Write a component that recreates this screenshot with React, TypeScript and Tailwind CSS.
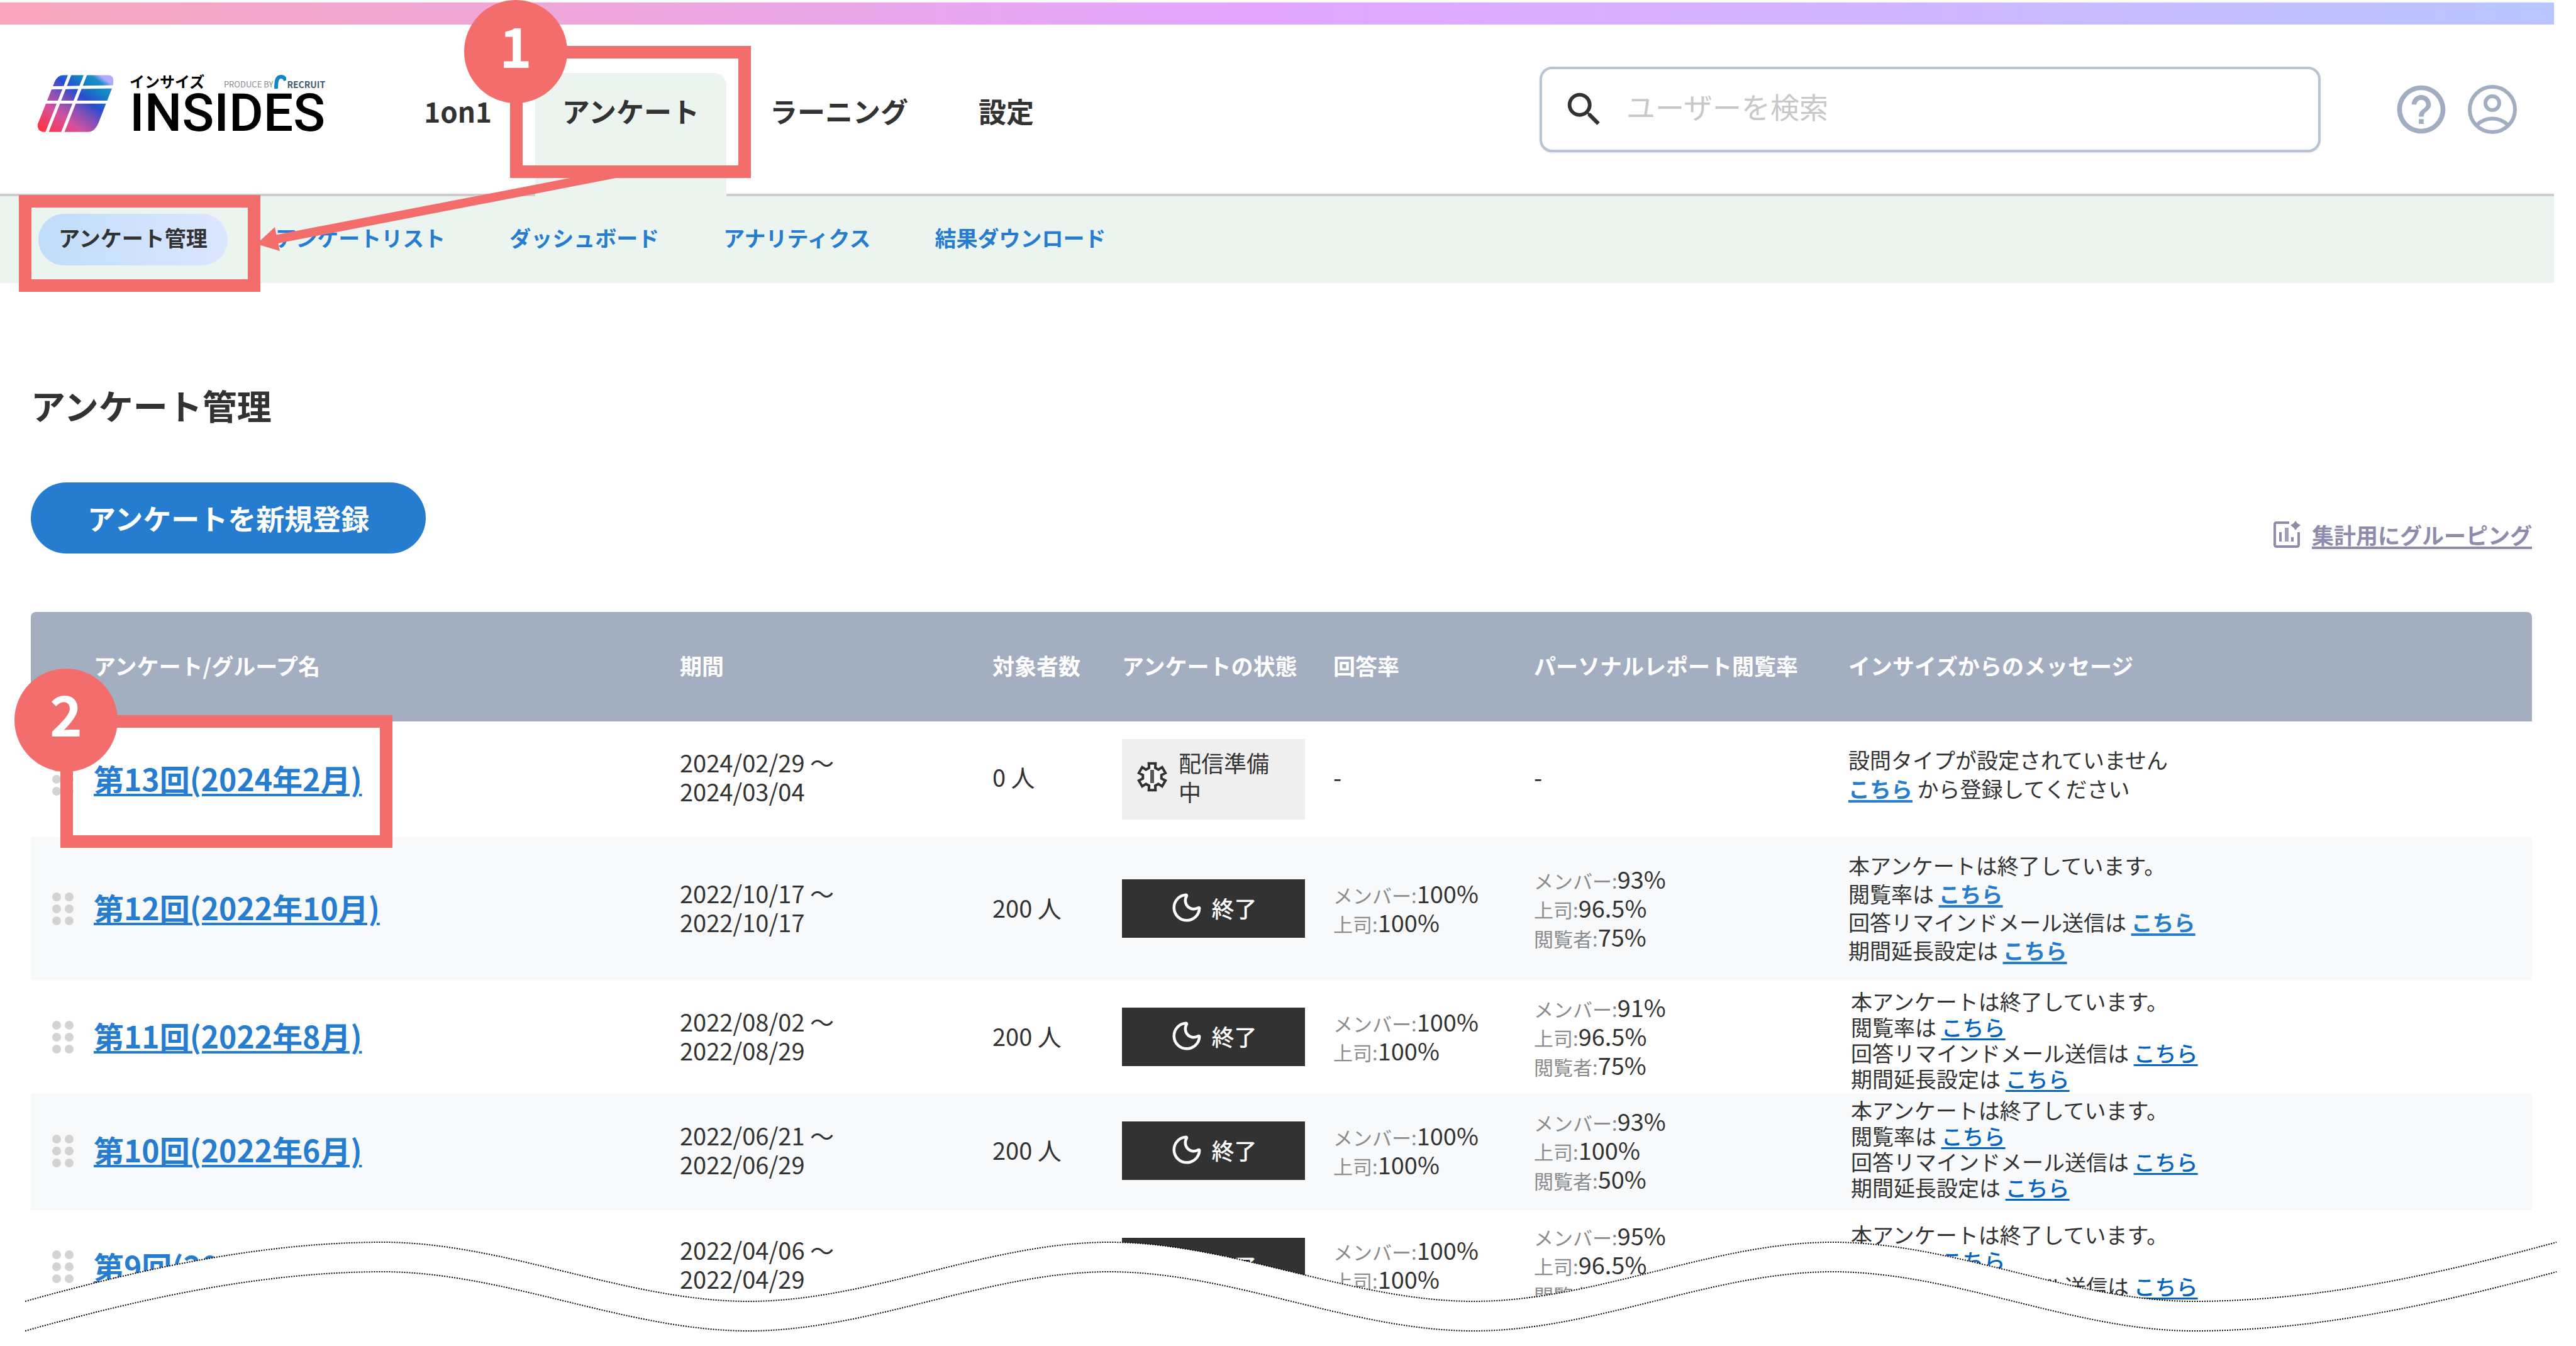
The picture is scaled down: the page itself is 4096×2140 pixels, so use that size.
import React from "react";
import { MdHelpOutline, MdSearch } from "react-icons/md";
import { Moon } from "lucide-react";

type Rate = { label: string; value: string };

type Survey = {
  name: string;
  from: string;
  to: string;
  count: string;
  done: boolean;
  answer: Rate[];
  report: Rate[];
  rowClass: string;
  nameClass: string;
  cellClass: string;
  messageClass: string;
  linkClass: string;
};

const members = (value: string): Rate => ({ label: "メンバー:", value });
const boss = (value: string): Rate => ({ label: "上司:", value });
const viewer = (value: string): Rate => ({ label: "閲覧者:", value });

const blueLink = "font-bold text-[#267dcf] underline decoration-4 underline-offset-4";
const deepLink = "font-medium text-[#0563c1] underline decoration-3 underline-offset-4";

const surveys: Survey[] = [
  {
    name: "第13回(2024年2月)",
    from: "2024/02/29",
    to: "2024/03/04",
    count: "0",
    done: false,
    answer: [],
    report: [],
    rowClass: "h-[184px] bg-white",
    nameClass: "",
    cellClass: "pb-2",
    messageClass: "pb-4 leading-[46px]",
    linkClass: blueLink,
  },
  {
    name: "第12回(2022年10月)",
    from: "2022/10/17",
    to: "2022/10/17",
    count: "200",
    done: true,
    answer: [members("100%"), boss("100%")],
    report: [members("93%"), boss("96.5%"), viewer("75%")],
    rowClass: "h-[227px] bg-[#f7f9fb]",
    nameClass: "",
    cellClass: "pb-1",
    messageClass: "pb-1 leading-[45px]",
    linkClass: blueLink,
  },
  {
    name: "第11回(2022年8月)",
    from: "2022/08/02",
    to: "2022/08/29",
    count: "200",
    done: true,
    answer: [members("100%"), boss("100%")],
    report: [members("91%"), boss("96.5%"), viewer("75%")],
    rowClass: "h-[181px] bg-white",
    nameClass: "",
    cellClass: "pb-1",
    messageClass: "pt-2 pl-1 leading-[41px]",
    linkClass: deepLink,
  },
  {
    name: "第10回(2022年6月)",
    from: "2022/06/21",
    to: "2022/06/29",
    count: "200",
    done: true,
    answer: [members("100%"), boss("100%")],
    report: [members("93%"), boss("100%"), viewer("50%")],
    rowClass: "h-[185px] bg-[#f7f9fb]",
    nameClass: "pb-1",
    cellClass: "pb-2",
    messageClass: "pb-3 pl-1 leading-[41px]",
    linkClass: deepLink,
  },
  {
    name: "第9回(2022年4月)",
    from: "2022/04/06",
    to: "2022/04/29",
    count: "200",
    done: true,
    answer: [members("100%"), boss("100%")],
    report: [members("95%"), boss("96.5%"), viewer("75%")],
    rowClass: "h-[184px] bg-white",
    nameClass: "pb-1",
    cellClass: "pb-3",
    messageClass: "pt-4 pl-1 leading-[41px]",
    linkClass: deepLink,
  },
];

const gearPoints = Array.from({ length: 6 }, (_, tooth) =>
  [
    [15, -19],
    [22, -14],
    [22, 14],
    [15, 19],
  ]
    .map(([radius, offset]) => {
      const angle = ((tooth * 60 + offset - 90) * Math.PI) / 180;
      return `${26 + radius * Math.cos(angle)},${26 + radius * Math.sin(angle)}`;
    })
    .join(" ")
).join(" ");

function GearAlertIcon() {
  return (
    <svg viewBox="0 0 52 52" className="size-[52px] shrink-0" aria-hidden="true">
      <polygon points={gearPoints} fill="#fafafa" stroke="#323232" strokeWidth="4" strokeLinejoin="miter" />
      <path d="M26 15V36" stroke="#5a5a5a" strokeWidth="6" />
    </svg>
  );
}

function PersonIcon() {
  return (
    <svg viewBox="0 0 78 78" className="size-[78px]" fill="none" stroke="#a1aec2" strokeWidth="6" aria-hidden="true">
      <circle cx="39" cy="39" r="36" />
      <circle cx="39" cy="29" r="11" />
      <path d="M14 64C28 50 50 50 64 64" />
    </svg>
  );
}

function ChartPlusIcon() {
  return (
    <svg viewBox="0 0 44 44" className="size-11 shrink-0" aria-hidden="true">
      <path d="M26 3H6Q3 3 3 6V38Q3 41 6 41H38Q41 41 41 38V18" fill="none" stroke="#8f8cab" strokeWidth="4" />
      <path d="M36 0L39 4L44 7L39 11L36 15L33 11L28 7L33 4Z" fill="#8f8cab" />
      <path d="M12 18V33" stroke="#8f8cab" strokeWidth="4" />
      <path d="M22 11V33" stroke="#a3a0bd" strokeWidth="6" />
      <path d="M31 26V33" stroke="#8f8cab" strokeWidth="4" />
    </svg>
  );
}

function DragDots() {
  return (
    <svg viewBox="0 0 34 52" className="h-[52px] w-[34px]" fill="#d3d3d3" aria-hidden="true">
      {[7, 26, 45].map((y) => (
        <React.Fragment key={y}>
          <circle cx="7" cy={y} r="7" />
          <circle cx="27" cy={y} r="7" />
        </React.Fragment>
      ))}
    </svg>
  );
}

function Logo() {
  return (
    <a href="#" className="flex shrink-0 gap-[25px] pb-[18px]" aria-label="INSIDES">
      <svg viewBox="44 204 398 298" className="h-[91px] w-[122px]" aria-hidden="true">
        <defs>
          <linearGradient id="mark" gradientUnits="userSpaceOnUse" x1="60" y1="490" x2="310" y2="160">
            <stop offset="0" stopColor="#ff3340" />
            <stop offset="0.3" stopColor="#d4509e" />
            <stop offset="0.5" stopColor="#7c50b8" />
            <stop offset="0.65" stopColor="#2a4bd0" />
            <stop offset="0.84" stopColor="#1386c4" />
            <stop offset="0.93" stopColor="#1f8bcb" />
            <stop offset="1" stopColor="#b2aaff" />
          </linearGradient>
        </defs>
        <path
          d="M178 206H412Q440 206 440 232V256L366 446Q346 501 308 501H72Q44 496 46 462L134 242Q150 206 178 206Z"
          fill="url(#mark)"
        />
        <path d="M216 196L92 510M298 196L174 510" stroke="#fff" strokeWidth="16" />
        <path d="M40 273L450 266M40 346H450" stroke="#fff" strokeWidth="16" />
      </svg>
      <span className="flex flex-col text-black">
        <span className="flex h-[31px] items-start justify-between">
          <span className="text-2xl leading-[20px] font-bold">インサイズ</span>
          <span className="flex h-[22px] items-end gap-px">
            <span className="text-[13px] leading-[14px] text-[#8a8a8a]">PRODUCE BY</span>
            <svg viewBox="0 0 20 22" className="h-[22px] w-5" aria-hidden="true">
              <path d="M4 22C4 8 6 3 12 3Q17 3 19 9" fill="none" stroke="#1384c8" strokeWidth="6" />
            </svg>
            <span className="text-[14px] leading-[14px] font-bold text-[#3f5a6b]">RECRUIT</span>
          </span>
        </span>
        <span className="font-['Roboto',sans-serif] text-[84px] leading-[60px] font-medium">INSIDES</span>
      </span>
    </a>
  );
}

function NavItem({ label, active }: { label: string; active?: boolean }) {
  return (
    <a
      href="#"
      aria-current={active ? "page" : undefined}
      className={
        active
          ? "h-[196px] rounded-t-[20px] bg-[#ebf4ef] px-[43px] pt-[30px]"
          : "h-[196px] px-[43px] pt-[30px]"
      }
    >
      {label}
    </a>
  );
}

function Status({ done }: { done: boolean }) {
  if (done) {
    return (
      <span className="flex h-[93px] w-[291px] items-center justify-center gap-3 bg-[#323232] pb-1 text-[36px] font-medium text-white">
        <Moon size={54} strokeWidth={2} aria-hidden="true" />
        終了
      </span>
    );
  }
  return (
    <span className="flex h-32 w-[291px] items-center gap-4 bg-[#efefef] pr-10 pb-2 pl-[22px] text-[36px]">
      <GearAlertIcon />
      配信準備中
    </span>
  );
}

function Rates({ rates }: { rates: Rate[] }) {
  if (rates.length === 0) return <>-</>;
  return (
    <>
      {rates.map((rate) => (
        <div key={rate.label} className="flex h-[46px] items-baseline">
          <span className="text-[31px] text-[#8c8c8c]">{rate.label}</span>
          <span>{rate.value}</span>
        </div>
      ))}
    </>
  );
}

function Message({ survey }: { survey: Survey }) {
  const here = (
    <a href="#" className={survey.linkClass}>
      こちら
    </a>
  );
  if (!survey.done) {
    return (
      <>
        <p>設問タイプが設定されていません</p>
        <p>{here} から登録してください</p>
      </>
    );
  }
  return (
    <>
      <p>本アンケートは終了しています。</p>
      <p>閲覧率は {here}</p>
      <p>回答リマインドメール送信は {here}</p>
      <p>期間延長設定は {here}</p>
    </>
  );
}

const wave =
  "C230 51 419 10 609 10C802 10 997 104 1190 104C1383 104 1571 10 1764 10C1957 10 2150 104 2343 104C2536 104 2723 10 2914 10C3107 10 3297 104 3488 104C3680 104 3873 62 4065 10";

function TornEdge() {
  return (
    <svg
      viewBox="0 0 4096 175"
      preserveAspectRatio="none"
      className="absolute bottom-0 left-0 h-[175px] w-full"
      fill="none"
      aria-hidden="true"
    >
      <path d={`M0 175V104H40${wave}H4096V175Z`} fill="#fff" />
      <path d={`M40 104${wave}`} stroke="#000" strokeWidth="2" strokeDasharray="2 2" />
      <g transform="translate(0 47)">
        <path d={`M40 104${wave}`} stroke="#000" strokeWidth="2" strokeDasharray="2 2" />
      </g>
    </svg>
  );
}

function Annotations() {
  const badge =
    "absolute flex size-[164px] items-center justify-center rounded-full bg-[#f46d6d] pb-6 text-[88px] leading-none font-bold text-white";
  return (
    <div className="pointer-events-none">
      <svg viewBox="0 0 600 150" className="absolute top-[270px] left-[400px] h-[150px] w-[600px]" aria-hidden="true">
        <path d="M595 3L36 111" stroke="#f46d6d" strokeWidth="14" />
        <path d="M8 118L37 91L45 129Z" fill="#f46d6d" />
      </svg>
      <div className="absolute top-[73px] left-[811px] h-[210px] w-[383px] border-[20px] border-[#f46d6d]" />
      <div className="absolute top-[310px] left-[30px] h-[154px] w-[384px] border-[20px] border-[#f46d6d]" />
      <div className="absolute top-[1137px] left-[96px] h-[211px] w-[528px] border-[20px] border-[#f46d6d]" />
      <div className={`${badge} top-0 left-[738px]`}>1</div>
      <div className={`${badge} top-[1063px] left-[23px]`}>2</div>
    </div>
  );
}

export default function App() {
  return (
    <div className="relative min-h-screen overflow-hidden bg-white font-['Noto_Sans_CJK_JP',sans-serif] text-[#323232]">
      <div className="pt-1 pr-[35px]">
        <div className="h-[35px] bg-linear-to-r from-[#f8a6bc] via-[#e2a6ff] to-[#b8c6ff]" />
        <header className="flex h-[273px] items-center border-b-4 border-[#cdcdcd] pr-[59px] pl-[59px]">
          <Logo />
          <nav
            aria-label="メイン"
            className="-mb-1 ml-[114px] flex shrink-0 gap-[26px] self-end text-[44px] leading-[60px] font-bold"
          >
            <NavItem label="1on1" />
            <NavItem label="アンケート" active />
            <NavItem label="ラーニング" />
            <NavItem label="設定" />
          </nav>
          <label className="ml-auto flex h-[136px] w-[31.5%] items-center gap-8 rounded-[20px] border-4 border-[#b9c4d3] bg-white px-8 shadow-sm">
            <MdSearch className="size-[70px] shrink-0" aria-hidden="true" />
            <input
              type="search"
              aria-label="ユーザーを検索"
              placeholder="ユーザーを検索"
              className="min-w-0 flex-1 pb-3 text-[46px] leading-[60px] outline-none placeholder:text-[#c8c8c8]"
            />
          </label>
          <button type="button" aria-label="ヘルプ" className="ml-[114px] shrink-0 text-[#a1aec2]">
            <MdHelpOutline className="size-[92px]" />
          </button>
          <button type="button" aria-label="アカウント" className="ml-7 shrink-0">
            <PersonIcon />
          </button>
        </header>
        <nav
          aria-label="アンケート"
          className="flex h-[138px] items-center bg-[#ebf4ef] pl-[61px] text-[34px] font-bold text-[#267dcf]"
        >
          <a
            href="#"
            aria-current="page"
            className="mr-[76px] flex h-[82px] items-center rounded-full bg-linear-to-r from-[#bfddf9] to-[#dde6ff] px-8 pb-2 text-[#323232]"
          >
            アンケート管理
          </a>
          <div className="flex gap-[102px] pb-2">
            <a href="#">アンケートリスト</a>
            <a href="#">ダッシュボード</a>
            <a href="#">アナリティクス</a>
            <a href="#">結果ダウンロード</a>
          </div>
        </nav>
      </div>

      <main className="pr-[70px] pl-[49px]">
        <h1 className="mt-[153px] text-[55px] leading-[80px] font-bold">アンケート管理</h1>
        <div className="mt-[84px] flex items-end justify-between">
          <button
            type="button"
            className="flex h-[113px] items-center rounded-full bg-[#267dcf] px-[90px] text-[45px] font-bold text-white"
          >
            アンケートを新規登録
          </button>
          <a
            href="#"
            className="mb-[7px] flex items-center gap-[18px] text-[35px] leading-[46px] font-bold text-[#8f8cab]"
          >
            <ChartPlusIcon />
            <span className="underline decoration-4 underline-offset-4">集計用にグルーピング</span>
          </a>
        </div>

        <table className="mt-[93px] w-full table-fixed text-left">
          <thead>
            <tr className="h-[174px] text-[35px] text-white *:bg-[#a4aec1] *:pb-1 *:font-bold">
              <th className="w-[100px] rounded-tl-lg" aria-label="並べ替え" />
              <th className="w-[932px]">アンケート/グループ名</th>
              <th className="w-[497px]">期間</th>
              <th className="w-[206px]">対象者数</th>
              <th className="w-[336px]">アンケートの状態</th>
              <th className="w-[319px]">回答率</th>
              <th className="w-[500px]">パーソナルレポート閲覧率</th>
              <th className="rounded-tr-lg">インサイズからのメッセージ</th>
            </tr>
          </thead>
          <tbody className="text-[38px] leading-[46px]">
            {surveys.map((survey) => (
              <tr key={survey.name} className={survey.rowClass}>
                <td className={survey.nameClass}>
                  <button type="button" aria-label={`${survey.name}を移動`} className="ml-[34px] block">
                    <DragDots />
                  </button>
                </td>
                <td className={survey.nameClass}>
                  <a
                    href="#"
                    className="text-[48px] font-bold text-[#267dcf] underline decoration-4 underline-offset-4"
                  >
                    {survey.name}
                  </a>
                </td>
                <td className={survey.cellClass}>
                  {survey.from} ～
                  <br />
                  {survey.to}
                </td>
                <td className={survey.cellClass}>{survey.count} 人</td>
                <td className={survey.nameClass}>
                  <Status done={survey.done} />
                </td>
                <td className={survey.cellClass}>
                  <Rates rates={survey.answer} />
                </td>
                <td className={survey.cellClass}>
                  <Rates rates={survey.report} />
                </td>
                <td className={`${survey.messageClass} text-[34px]`}>
                  <Message survey={survey} />
                </td>
              </tr>
            ))}
          </tbody>
        </table>
      </main>

      <TornEdge />
      <Annotations />
    </div>
  );
}
